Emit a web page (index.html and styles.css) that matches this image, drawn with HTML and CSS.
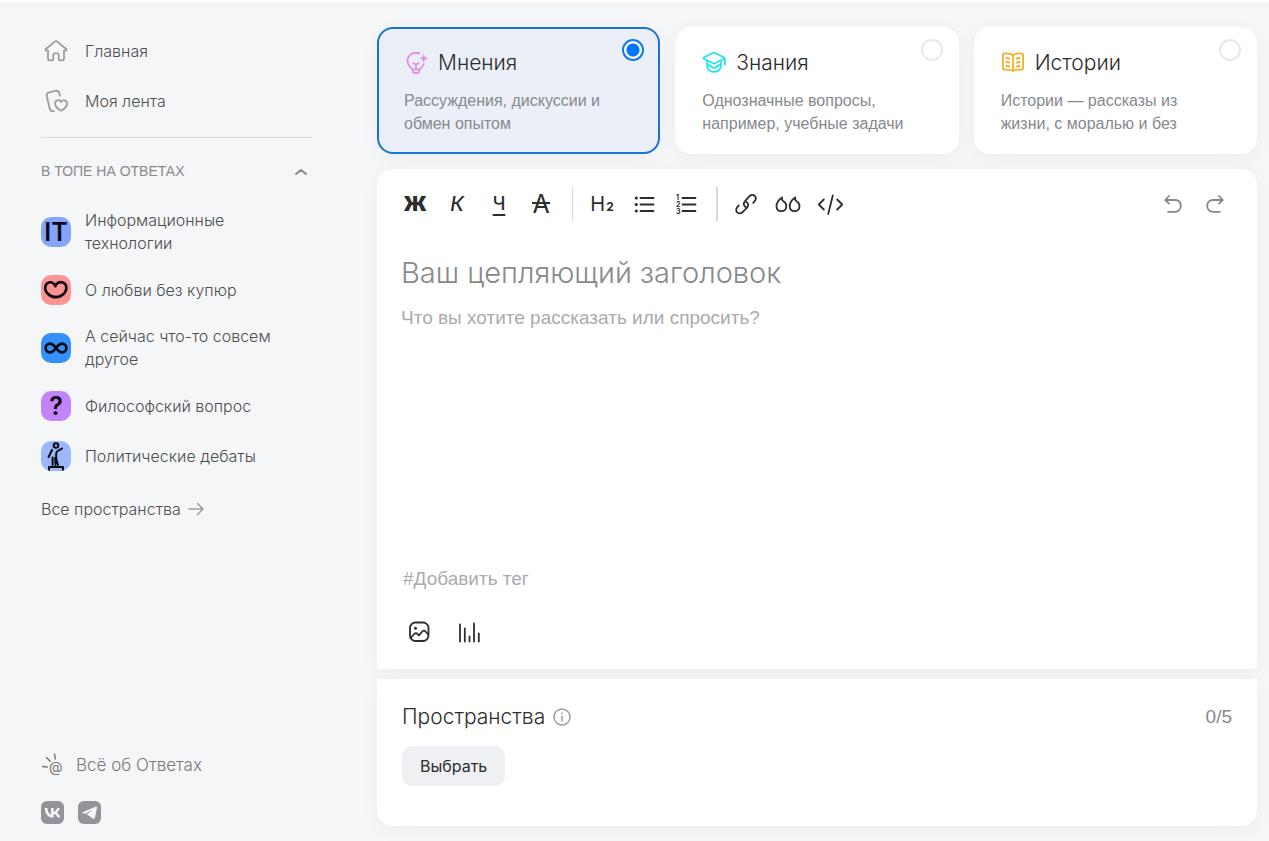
FILE: index.html
```html
<!DOCTYPE html>
<html lang="ru">
<head>
<meta charset="utf-8">
<meta name="viewport" content="width=device-width, initial-scale=1">
<title>Ответы — новый вопрос</title>
<link rel="stylesheet" href="styles.css">
</head>
<body>
<div class="page">
  <aside class="sidebar">
    <nav class="nav">
      <a class="nav-link" href="#">
        <span class="nav-icon"><svg width="24" height="24" viewBox="0 0 24 24" class="line"><path d="M10.7 2.600 1.900 10c-.8.8-.3 1.600.7 1.600H4V19c0 1.600.8 2.400 2.400 2.400H8.200c.7 0 1-.3 1-1v-3.600c0-3.600 5.600-3.600 5.600 0v3.600c0 .7.3 1 1 1h1.800c1.600 0 2.400-.8 2.400-2.400v-7.400h1.400c1 0 1.500-.8.7-1.600l-8.800-7.400c-.9-.7-1.700-.7-2.600 0z"/></svg></span>
        Главная
      </a>
      <a class="nav-link" href="#">
        <span class="nav-icon"><svg width="24" height="24" viewBox="0 0 24 24" class="line"><path d="M10 22.200c-2.700.5-3.800-.4-4.300-2.700L2.800 7.300c-.5-2.400.1-3.500 2.400-4L11 1.900c2.500-.5 3.700.1 4.400 2.500l.5 2.200M17 21.800c-3.400-1.900-5.900-4.200-5.900-7.200 0-3.600 4.300-4.600 6-1.600 1.700-3 6-2 6 1.600 0 3-2.600 5.300-6.100 7.200z"/></svg></span>
        Моя лента
      </a>
    </nav>
    <section class="top">
      <button class="top-toggle" type="button" aria-expanded="true">
        <span>В ТОПЕ НА ОТВЕТАХ</span>
        <svg width="16" height="16" viewBox="0 0 16 16" class="line chevron"><path d="M3 11l5-4 5 4"/></svg>
      </button>
      <div class="spaces">
        <a class="nav-link" href="#"><span class="badge badge-it">IT</span>Информационные технологии</a>
        <a class="nav-link" href="#"><span class="badge badge-love"><svg width="30" height="30" viewBox="0 0 30 30" class="ink"><path d="M14.500 11.200C13.200 7.400 8.800 6 6 8.600c-3 2.900-2.200 7.200.8 10.100 2.300 2.200 5 3.500 8.200 3.500 4.200 0 9.600-3.300 10.300-8.300.9-6.600-6.800-8.900-10.200-4.400"/></svg></span>О любви без купюр</a>
        <a class="nav-link" href="#"><span class="badge badge-other"><svg width="30" height="30" viewBox="0 0 30 30" class="ink"><path d="M15 15c-2.300-3.100-4-4.400-6-4.400a4.400 4.400 0 0 0 0 8.800c2 0 3.700-1.300 6-4.400s3.700-4.400 6-4.400a4.400 4.400 0 0 1 0 8.800c-2.300 0-3.700-1.300-6-4.400z"/></svg></span>А сейчас что-то совсем другое</a>
        <a class="nav-link" href="#"><span class="badge badge-question">?</span>Философский вопрос</a>
        <a class="nav-link" href="#"><span class="badge badge-debate"><svg width="30" height="30" viewBox="0 0 30 30" class="ink thin"><circle cx="15" cy="4.500" r="2.300"/><path d="M11 9 7.600 16M21 7.500c-3 2.500-5.500 1.500-5.800 4.500v6l1.800 6M11.600 16.500V24M14.200 17l.3 7M8 29.500V26h14v3.500"/></svg></span>Политические дебаты</a>
      </div>
      <a class="all-link" href="#">Все пространства
        <svg width="16" height="16" viewBox="0 0 16 16" class="line"><path d="M1 8h14M9.500 2.500 15 8l-5.500 5.500"/></svg>
      </a>
    </section>
    <footer class="footer">
      <a class="about" href="#">
        <svg width="24" height="24" viewBox="0 0 24 24"><path class="rays" d="M1.500 13.500l4.800.5M5.500 4.500l3.700 3.700M13.500 1l.8 4.800"/><text x="8" y="19" class="at">@</text></svg>
        Всё об Ответах
      </a>
      <div class="social">
        <a href="#" aria-label="ВКонтакте"><svg width="23" height="23" viewBox="0 0 24 24"><rect width="24" height="24" rx="6" fill="#929499"/><path fill="#f5f6f8" d="M12.800 17.200C7.300 17.200 4.200 13.500 4 7.200h2.800c.1 4.600 2.200 6.500 3.700 6.900V7.200h2.600v4c1.600-.2 3.300-2 3.900-4h2.600c-.4 2.400-2.200 4.200-3.500 5 1.300.6 3.300 2.200 4.100 5h-2.900c-.6-1.900-2.200-3.400-4.200-3.600v3.600z"/></svg></a>
        <a href="#" aria-label="Telegram"><svg width="23" height="23" viewBox="0 0 24 24"><rect width="24" height="24" rx="6" fill="#929499"/><path fill="#f5f6f8" d="M4.300 12 18.400 6c1-.4 1.600.1 1.400 1.200l-2.200 10.400c-.2 1.100-.9 1.300-1.700.8l-6.600-4.200 6-5.200-7.400 4.400-3.500-.8c-.7-.2-.7-.4-.1-.6z"/></svg></a>
      </div>
    </footer>
  </aside>

  <main class="main">
    <form class="form">
      <div class="kinds">
        <label class="kind">
          <input class="radio" type="radio" name="kind" checked>
          <span class="kind-title">
            <svg width="24" height="24" viewBox="0 0 24 24" class="line pink"><path d="M15.500 2.400C9 .2 3.500 4.200 3.500 9.900c0 4 2.400 6 4.600 8.400h7.800c1.800-1.900 3.300-3.200 4-5.300M8.800 18.500v1.300c0 1.500.6 2.200 2 2.200h2.400c1.400 0 2-.7 2-2.200v-1.300M12 18v-4l-2.500-2M12 14l2.500-2"/><path class="pink-fill" d="M19.700 2.600 21 6l3 1.200L21 8.400l-1.300 3.400-1.300-3.400-3-1.200 3-1.200z"/></svg>
            Мнения
          </span>
          <span class="kind-text">Рассуждения, дискуссии и обмен опытом</span>
        </label>
        <label class="kind">
          <input class="radio" type="radio" name="kind">
          <span class="kind-title">
            <svg width="24" height="24" viewBox="0 0 24 24" class="line cyan"><path d="M11 2 2.300 6.300c-1 .5-1 1.200 0 1.700L11 12.300c.8.4 1.300.4 2 0L21.700 8c1-.5 1-1.200 0-1.700L13 2c-.7-.4-1.200-.4-2 0zM22.800 7.500v6M5.200 10v5.200c0 3.800 3.600 5.600 6.800 5.600s6.800-1.800 6.800-5.600V10M5.500 14c1.300 0 2.500.3 3.300 1.200 1.900 1.900 4.500 1.900 6.400 0 .8-.9 2-1.200 3.300-1.200"/></svg>
            Знания
          </span>
          <span class="kind-text">Однозначные вопросы, например, учебные задачи</span>
        </label>
        <label class="kind">
          <input class="radio" type="radio" name="kind">
          <span class="kind-title">
            <svg width="24" height="24" viewBox="0 0 24 24" class="line gold"><path d="M12 4.300C10 2.200 7 2.200 3.900 2.500 2.500 2.600 1.900 3.200 1.900 4.600v12.100c0 1.500.6 2 2 2 3.100-.1 6.100-.3 8.100 1.300 2-1.600 5-1.400 8.100-1.300 1.400 0 2-.5 2-2V4.600c0-1.400-.6-2-2-2.100C17 2.200 14 2.200 12 4.300zM12 4.300V20M5.400 7l3 .5M5.400 11l3 .5M5.400 15l3 .5M18.600 7l-3 .5M18.600 11l-3 .5M18.600 15l-3 .5"/></svg>
            Истории
          </span>
          <span class="kind-text">Истории — рассказы из жизни, с моралью и без</span>
        </label>
      </div>

      <section class="editor">
        <div class="toolbar">
          <button type="button" class="tool bold" aria-label="Жирный">Ж</button>
          <button type="button" class="tool italic" aria-label="Курсив">К</button>
          <button type="button" class="tool under" aria-label="Подчёркнутый">Ч</button>
          <button type="button" class="tool strike" aria-label="Зачёркнутый">А</button>
          <span class="divider"></span>
          <button type="button" class="tool head" aria-label="Заголовок">H<small>2</small></button>
          <button type="button" class="tool" aria-label="Список"><svg width="24" height="24" viewBox="0 0 24 24" class="line"><path d="M8.500 6h13M8.500 12.500h13M8.500 19h13"/><g fill="currentColor" stroke="none"><circle cx="4.300" cy="6" r="1.600"/><circle cx="4.300" cy="12.500" r="1.600"/><circle cx="4.300" cy="19" r="1.600"/></g></svg></button>
          <button type="button" class="tool" aria-label="Нумерованный список"><svg width="24" height="24" viewBox="0 0 24 24" class="line"><path d="M8.500 6h13M8.500 12.500h13M8.500 19h13"/><g class="num"><text x="2" y="8">1</text><text x="2" y="15">2</text><text x="2" y="22">3</text></g></svg></button>
          <span class="divider thick"></span>
          <button type="button" class="tool" aria-label="Ссылка"><svg width="24" height="24" viewBox="0 0 24 24" class="line"><path d="M12.400 15.500c-2.800-1.300-3.400-4-1.500-6.200l4.300-4.900c1.600-1.900 3.900-2 5.400-.7 1.700 1.400 1.600 3.800.1 5.500l-1.500 1.700M11.600 9.500c2.800 1.300 3.400 4 1.500 6.200l-4.300 4.200c-1.600 1.900-3.900 2-5.400.7-1.700-1.400-1.600-3.800-.1-5.500l1.500-1.700"/></svg></button>
          <button type="button" class="tool" aria-label="Цитата"><svg width="26" height="24" viewBox="0 0 26 24" class="line"><path d="M7 5.500C3.500 8 1.500 10.500 1.500 14c0 3.300 2.100 5.200 4.900 5.200s4.900-2 4.900-4.900c0-2.400-1-4.100-3-5.100C7.200 8.500 6.700 7 7 5.500zM20.200 5.500c-3.500 2.500-5.500 5-5.500 8.500 0 3.300 2.100 5.200 4.900 5.200s4.900-2 4.900-4.900c0-2.400-1-4.100-3-5.100-1.100-.7-1.600-2.200-1.300-3.700z"/></svg></button>
          <button type="button" class="tool" aria-label="Код"><svg width="26" height="24" viewBox="0 0 26 24" class="line"><path d="M6.800 7.500 1.800 12.500l5 5M20.200 7.500l5 5-5 5M15.800 3.500l-4.600 18.500"/></svg></button>
          <span class="spacer"></span>
          <button type="button" class="tool grey" aria-label="Отменить"><svg width="20" height="20" viewBox="0 0 20 20" class="line"><path d="M6 2 2.200 6 6 9.700M2.700 6H12c3.600 0 5.800 2.300 5.800 5.800s-2.200 6-5.800 6H5"/></svg></button>
          <button type="button" class="tool grey" aria-label="Повторить"><svg width="20" height="20" viewBox="0 0 20 20" class="line"><path d="M14 2l3.800 4L14 9.700M17.300 6H8c-3.600 0-5.800 2.300-5.800 5.800s2.200 6 5.800 6h7"/></svg></button>
        </div>
        <input class="title-input" type="text" aria-label="Заголовок" placeholder="Ваш цепляющий заголовок">
        <textarea class="body-input" aria-label="Текст" placeholder="Что вы хотите рассказать или спросить?"></textarea>
        <input class="tag-input" type="text" aria-label="Тег" placeholder="#Добавить тег">
        <div class="attach">
          <button type="button" class="attach-btn" aria-label="Добавить фото"><svg width="24" height="24" viewBox="0 0 24 24" class="line"><rect x="3" y="2.500" width="18.500" height="18.500" rx="5.500"/><path d="M3.500 18l3.800-4c1.200-1.200 2.200-1.100 3.200.1l1.300 1.300 3.500-3.900c1-1.100 2.200-1.100 3.200 0l2.600 2.800"/><circle cx="8.500" cy="8.300" r="1.500" fill="currentColor" stroke="none"/></svg></button>
          <button type="button" class="attach-btn" aria-label="Добавить опрос"><svg width="24" height="24" viewBox="0 0 24 24" class="line"><path d="M3 4.500v17M7.800 8.500v13M12.500 16.500v5M17 3.500v18M21.800 13.500v8"/></svg></button>
        </div>
      </section>

      <section class="picker">
        <div class="picker-head">
          <h2>Пространства</h2>
          <svg width="20" height="20" viewBox="0 0 20 20" class="line info"><circle cx="10" cy="10" r="8"/><path d="M10 9.300v4.500M10 6v.4"/></svg>
          <span class="count">0/5</span>
        </div>
        <button type="button" class="choose">Выбрать</button>
      </section>
    </form>
  </main>
</div>
</body>
</html>
```
FILE: styles.css
```css
* { box-sizing: border-box; }

body {
  margin: 0;
  background: #f5f6f8;
  color: #2c2d2e;
  font-family: Inter, "Liberation Sans", sans-serif;
  font-size: 16px;
}

a { color: inherit; text-decoration: none; }
button { border: 0; padding: 0; background: none; color: inherit; font: inherit; cursor: pointer; }
svg { display: block; flex: none; }

.line { fill: none; stroke: currentColor; stroke-width: 1.8; stroke-linecap: round; stroke-linejoin: round; }

.page { display: flex; min-height: 100vh; border-top: 2px solid #fff; }

/* Sidebar */
.sidebar {
  display: flex;
  flex: none;
  flex-direction: column;
  width: 377px;
  padding: 24px 65px 17px 41px;
  color: #4c4e51;
  font-weight: 300;
}
.nav { padding-bottom: 11px; border-bottom: 1px solid #d5d7da; }
.nav-link { display: flex; align-items: center; gap: 14px; line-height: 23px; }
.nav .nav-link { height: 50px; }
.nav-icon { display: flex; justify-content: center; width: 30px; color: #9b9da1; }
.top-toggle {
  display: flex;
  align-items: center;
  justify-content: space-between;
  width: 100%;
  height: 24px;
  margin-top: 21px;
  padding-right: 3px;
  color: #87898d;
  font: 14px "Liberation Sans", Arial, sans-serif;
}
.chevron { stroke-width: 2; }
.spaces { display: flex; flex-direction: column; gap: 20px; margin-top: 26px; padding-right: 30px; }
.badge {
  display: flex;
  flex: none;
  align-items: center;
  justify-content: center;
  width: 30px;
  height: 30px;
  border-radius: 10px;
  color: #0a0a14;
  overflow: hidden;
}
.badge-it { background: #86a5fa; font-size: 25px; font-weight: 600; }
.badge-love { background: #fc9292; }
.badge-other { background: #3490fa; }
.badge-question { background: #c283fb; font-size: 25px; font-weight: 600; }
.badge-debate { background: #9db8fa; }
.ink { fill: none; stroke: #0a0a14; stroke-width: 2.7; stroke-linecap: round; stroke-linejoin: round; }
.thin { stroke-width: 2; }
.all-link { display: inline-flex; align-items: center; gap: 7px; margin-top: 26px; line-height: 24px; }
.all-link svg { color: #9b9da1; stroke-width: 1.5; }
.footer { margin-top: auto; color: #75777b; }
.about { display: flex; align-items: center; gap: 11px; font-size: 17px; line-height: 24px; }
.rays { fill: none; stroke: currentColor; stroke-width: 1.5; stroke-linecap: round; }
.at { fill: currentColor; font: 14px Inter, sans-serif; }
.social { display: flex; gap: 14px; margin-top: 24px; }

/* Main column */
.main { flex: 1; min-width: 0; padding: 25px 12px 15px 0; }
.kinds { display: grid; grid-template-columns: repeat(3, 1fr); gap: 15px; }
.kind {
  position: relative;
  display: flex;
  flex-direction: column;
  gap: 14px;
  padding: 21px 30px 17px 25px;
  border: 2px solid transparent;
  border-radius: 16px;
  background: #fff;
  box-shadow: 0 4px 20px rgba(0, 0, 0, 0.04);
  cursor: pointer;
}
.kind:has(:checked) { border-color: #1a73cf; background: #ebf0f8; }
.kind-title { display: flex; align-items: center; gap: 10px; font-size: 21px; font-weight: 300; line-height: 25px; }
.kind-text { color: #87898d; font: 16px/23px "Liberation Sans", Arial, sans-serif; }
.pink { color: #e38fe6; }
.pink-fill { fill: #e38fe6; stroke: none; }
.cyan { color: #1fe5ea; }
.gold { color: #f0b030; }
.radio {
  position: absolute;
  top: 10px;
  right: 14px;
  width: 22px;
  height: 22px;
  margin: 0;
  border: 2px solid #e7e8ea;
  border-radius: 50%;
  background: #fff;
  appearance: none;
}
.radio:checked { border-color: #1579e8; background: radial-gradient(circle, #0077ff 6px, #fff 7px); }

.editor {
  display: flex;
  flex-direction: column;
  margin-top: 15px;
  padding: 18px 0 22px;
  border-radius: 16px 16px 0 0;
  background: #fff;
  box-shadow: 0 4px 20px rgba(0, 0, 0, 0.04);
}
.toolbar { display: flex; align-items: center; padding: 0 21px 0 17px; }
.tool {
  display: flex;
  align-items: center;
  justify-content: center;
  width: 42px;
  height: 34px;
  font-size: 20px;
  line-height: 24px;
}
.bold { font-weight: 900; }
.italic { font-style: italic; font-weight: 500; }
.under { text-decoration: underline 2px; text-underline-offset: 4px; font-size: 18px; font-weight: 500; }
.strike { position: relative; font-size: 25px; }
.strike::after {
  content: "";
  position: absolute;
  top: 15px;
  left: 12px;
  width: 18px;
  height: 2px;
  background: currentColor;
}
.head { align-items: baseline; gap: 1px; padding-top: 5px; }
.head small { font-size: 12px; font-weight: 700; }
.num { fill: currentColor; stroke: none; font: bold 7px Inter, sans-serif; }
.divider { width: 1px; height: 34px; margin: 0 8px 0 10px; background: #d9dadc; }
.thick { width: 2px; margin: 0 7px 0 9px; }
.spacer { flex: 1; }
.grey { color: #87898d; }

.title-input, .body-input, .tag-input {
  display: block;
  width: auto;
  margin: 0 24px;
  padding: 0;
  border: 0;
  outline: 0;
  background: none;
  color: #2c2d2e;
}
.title-input { height: 40px; margin-top: 31px; font: 300 29px Inter, sans-serif; }
.title-input::placeholder { color: #87898d; }
.body-input { height: 250px; margin-top: 13px; resize: none; font: 19px/26px "Liberation Sans", Arial, sans-serif; }
.tag-input { height: 26px; margin: 11px 26px 0; font: 19px "Liberation Sans", Arial, sans-serif; }
.body-input::placeholder, .tag-input::placeholder { color: #a9abae; }
.attach { display: flex; margin-top: 25px; padding: 0 17px; }
.attach-btn { display: flex; align-items: center; justify-content: center; width: 50px; height: 30px; }

.picker {
  margin-top: 10px;
  padding: 24px 25px 40px;
  border-radius: 0 0 16px 16px;
  background: #fff;
  box-shadow: 0 4px 20px rgba(0, 0, 0, 0.04);
}
.picker-head { display: flex; align-items: center; gap: 7px; }
.picker-head h2 { margin: 0; font-size: 21px; font-weight: 300; line-height: 28px; }
.info { color: #9b9da1; stroke-width: 1.5; }
.count { margin-left: auto; color: #87898d; font: 19px "Liberation Sans", Arial, sans-serif; }
.choose { height: 40px; margin-top: 15px; padding: 0 18px; border-radius: 10px; background: #eff0f4; font-size: 16px; }
```
